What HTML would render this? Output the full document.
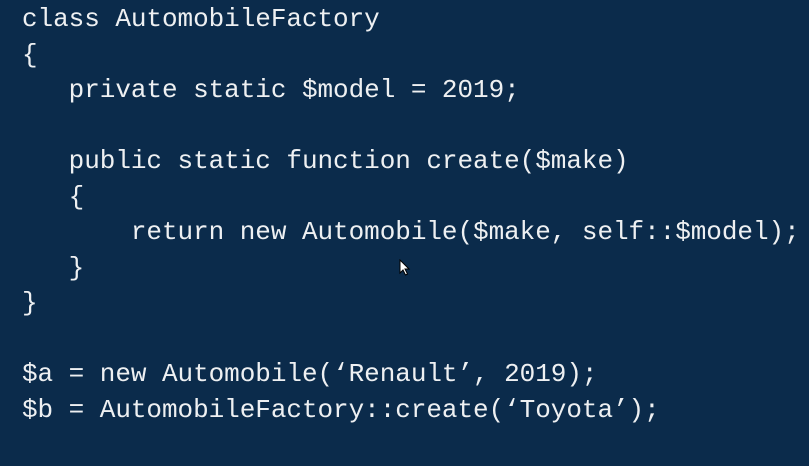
<!DOCTYPE html>
<html><head><style>
html,body{margin:0;padding:0;}
body{width:809px;height:466px;background:#0b2b4b;overflow:hidden;position:relative;}
pre{position:absolute;left:22px;top:2px;margin:0;font-family:"Liberation Mono",monospace;font-size:26px;line-height:35.5px;color:#eef0f2;letter-spacing:-0.05px;}
svg{position:absolute;left:399px;top:259px;}
</style></head><body>
<pre>class AutomobileFactory
{
   private static $model = 2019;

   public static function create($make)
   {
       return new Automobile($make, self::$model);
   }
}

$a = new Automobile(‘Renault’, 2019);
$b = AutomobileFactory::create(‘Toyota’);</pre>
<svg width="12" height="18" viewBox="0 0 12 18"><path d="M1 1 L1 14 L4 11 L6.5 16 L8.5 15 L6 10 L10 10 Z" fill="#fff" stroke="#000" stroke-width="1"/></svg>
</body></html>
